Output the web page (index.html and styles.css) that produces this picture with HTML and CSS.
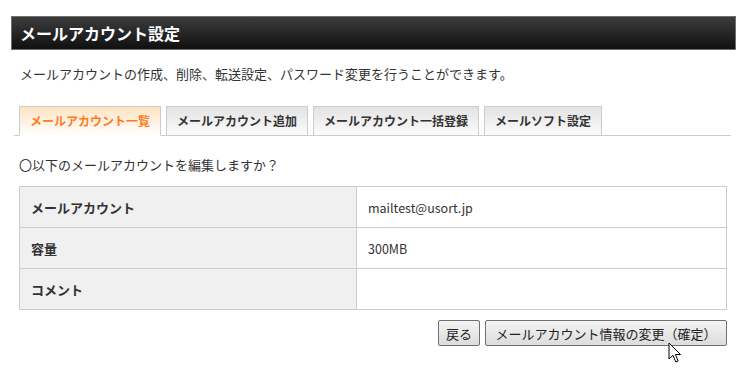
FILE: index.html
```html
<!DOCTYPE html>
<html lang="ja">
<head>
<meta charset="utf-8">
<title>メールアカウント設定</title>
<link rel="stylesheet" href="styles.css">
</head>
<body>
<div class="page">
  <h1 class="header">メールアカウント設定</h1>
  <p class="desc">メールアカウントの作成、削除、転送設定、パスワード変更を行うことができます。</p>
  <ul class="tabs">
    <li class="tab active">メールアカウント一覧</li>
    <li class="tab">メールアカウント追加</li>
    <li class="tab">メールアカウント一括登録</li>
    <li class="tab">メールソフト設定</li>
  </ul>
  <p class="question">〇以下のメールアカウントを編集しますか？</p>
  <table class="info">
    <tr><th>メールアカウント</th><td>mailtest@usort.jp</td></tr>
    <tr><th>容量</th><td>300MB</td></tr>
    <tr><th>コメント</th><td></td></tr>
  </table>
  <div class="actions">
    <button class="btn">戻る</button>
    <button class="btn wide">メールアカウント情報の変更（確定）</button>
  </div>
  <div class="pointer">
    <svg width="14" height="22" viewBox="0 0 14 22" xmlns="http://www.w3.org/2000/svg">
      <polygon points="1,1 1,17 5,13.3 7.8,20 10.1,19 7.4,12.5 12.5,12.5" fill="#ffffff" stroke="#000000" stroke-width="1"></polygon>
    </svg>
  </div>
</div>
</body>
</html>
```

FILE: styles.css
```css
html, body {
  margin: 0;
  padding: 0;
  background: #fff;
}
body {
  font-family: "Noto Sans CJK JP", "Noto Sans", sans-serif;
  color: #333;
  font-size: 13px;
}
.page {
  padding-top: 16px;
  padding-bottom: 30px;
  position: relative;
}
.header {
  margin: 0 12px 0 11px;
  height: 32px;
  line-height: 32px;
  border: 1px solid #6e6e6e;
  background: linear-gradient(#3c3c3c, #101010);
  color: #fff;
  font-size: 16px;
  font-weight: bold;
  padding-left: 8px;
}
.desc {
  margin: 14px 0 0 20px;
  line-height: 20px;
}
.tabs {
  list-style: none;
  margin: 22px 17px 0 14px;
  padding: 0 0 0 5px;
  display: flex;
  gap: 5px;
  border-bottom: 1px solid #cccccc;
}
.tab {
  height: 28px;
  line-height: 28px;
  padding: 0 10px;
  border: 1px solid #cccccc;
  background: linear-gradient(#e3e3e3, #fbfbfb);
  font-size: 12px;
  font-weight: bold;
  color: #333;
  margin-bottom: -1px;
}
.tab.active {
  background: linear-gradient(#ffe2c2, #ffffff);
  color: #ff7a1a;
  border-bottom-color: #fff;
}
.question {
  margin: 19px 0 0 19px;
  line-height: 20px;
}
.info {
  margin: 11px 0 0 19px;
  width: 708px;
  border-collapse: collapse;
}
.info th, .info td {
  border: 1px solid #cccccc;
  height: 40px;
  padding: 0 11px;
  text-align: left;
  font-size: 13px;
}
.info th {
  width: 314px;
  background: #f0f0f0;
  font-weight: bold;
}
.info td {
  color: #333;
  font-size: 12.5px;
}
.actions {
  margin: 10px 21px 0 0;
  display: flex;
  justify-content: flex-end;
  gap: 5px;
}
.btn {
  height: 26px;
  padding: 0 7px;
  font-family: "Noto Sans CJK JP", sans-serif;
  font-size: 13px;
  color: #222;
  border: 1px solid #707070;
  border-radius: 2px;
  background: linear-gradient(#f4f4f4, #dcdcdc);
}
.btn.wide {
  width: 242px;
}
.pointer {
  position: absolute;
  left: 668px;
  top: 342px;
  width: 14px;
  height: 22px;
  z-index: 10;
}
.pointer svg {
  display: block;
  overflow: visible;
}
```
